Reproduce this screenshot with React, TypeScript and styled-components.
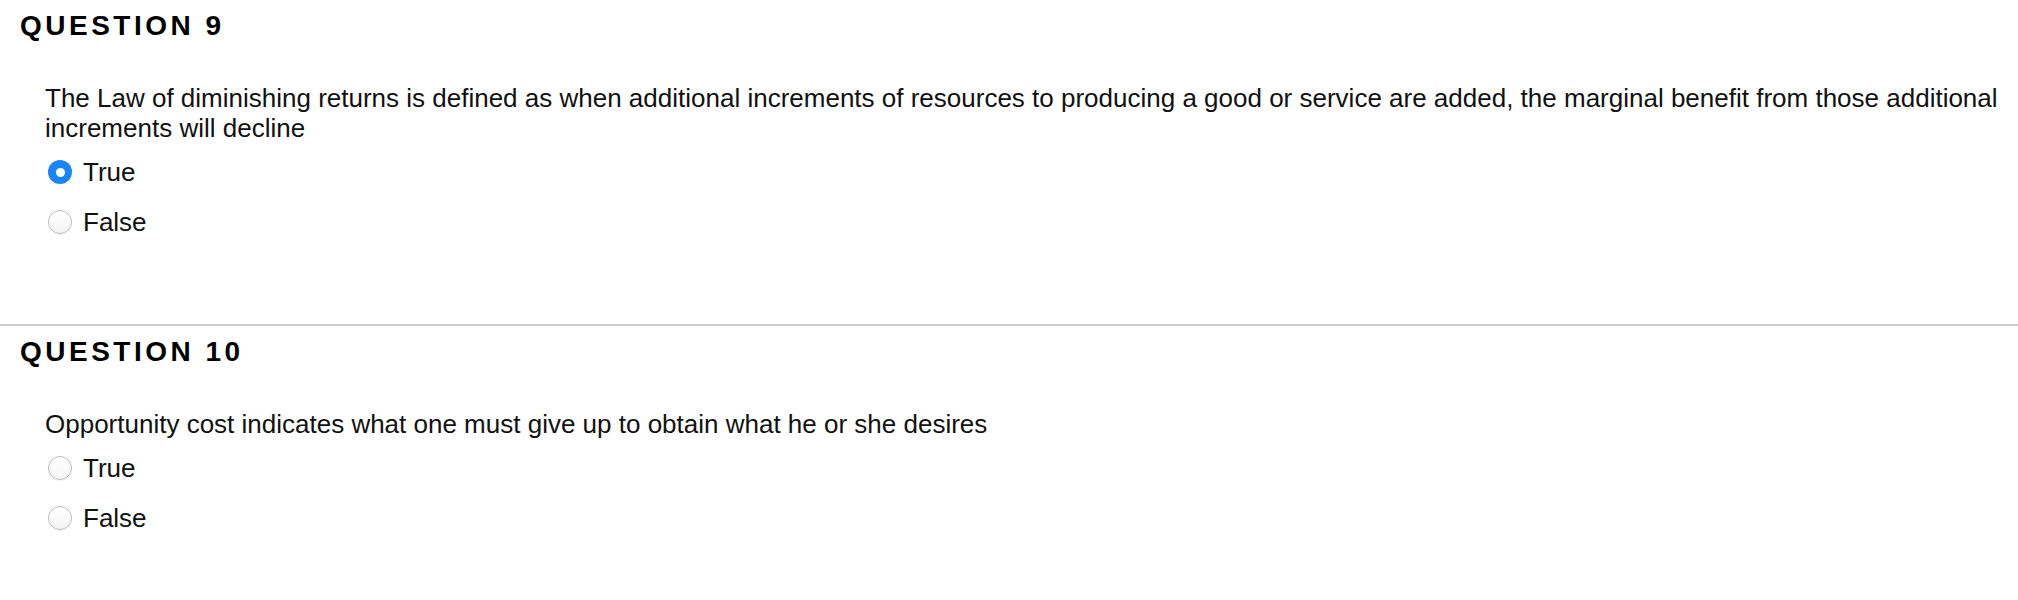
import React from "react";
import styled, { createGlobalStyle } from "styled-components";

const GlobalStyle = createGlobalStyle`
  html, body {
    margin: 0;
    padding: 0;
    background: #ffffff;
  }
  body {
    font-family: "Liberation Sans", Arial, Helvetica, sans-serif;
    color: #111111;
  }
`;

const Page = styled.div`
  display: flex;
  flex-direction: column;
  width: 2018px;
`;

const QuestionBlock = styled.section<{ $bottom: number }>`
  display: flex;
  flex-direction: column;
  padding: 9px 0 ${(p) => p.$bottom}px 20px;
`;

const Divider = styled.hr`
  margin: 0;
  border: 0;
  border-top: 2px solid #cccccc;
  width: 100%;
`;

const Heading = styled.h2`
  margin: 0;
  font-family: "Liberation Sans", Arial, Helvetica, sans-serif;
  font-size: 28px;
  line-height: 34px;
  font-weight: 700;
  letter-spacing: 3.5px;
  color: #000000;
`;

const Body = styled.div`
  display: flex;
  flex-direction: column;
  gap: 14px;
  margin-top: 40px;
  padding-left: 25px;
`;

const Prompt = styled.p`
  margin: 0;
  font-size: 26px;
  line-height: 30px;
  color: #111111;
`;

const Options = styled.div`
  display: flex;
  flex-direction: column;
  gap: 20px;
`;

const Option = styled.label`
  display: flex;
  align-items: center;
  gap: 11px;
  height: 30px;
  padding-left: 3px;
  font-size: 26px;
  line-height: 30px;
  color: #111111;
  cursor: pointer;
`;

const Radio = styled.span<{ $checked: boolean }>`
  box-sizing: border-box;
  display: inline-flex;
  align-items: center;
  justify-content: center;
  width: 24px;
  height: 24px;
  border-radius: 50%;
  flex: none;
  background: ${(p) =>
    p.$checked ? "#1a84fb" : "linear-gradient(#ffffff, #f4f4f4)"};
  border: ${(p) => (p.$checked ? "none" : "1px solid #bdbdbd")};
  box-shadow: ${(p) =>
    p.$checked ? "none" : "0 1px 1px rgba(0,0,0,0.06)"};

  &::after {
    content: "";
    display: ${(p) => (p.$checked ? "block" : "none")};
    width: 9px;
    height: 9px;
    border-radius: 50%;
    background: #ffffff;
  }
`;

type Q = {
  title: string;
  prompt: string;
  selected: number | null;
  bottom: number;
};

const questions: Q[] = [
  {
    title: "QUESTION 9",
    prompt:
      "The Law of diminishing returns is defined as when additional increments of resources to producing a good or service are added, the marginal benefit from those additional increments will decline",
    selected: 0,
    bottom: 87,
  },
  {
    title: "QUESTION 10",
    prompt:
      "Opportunity cost indicates what one must give up to obtain what he or she desires",
    selected: null,
    bottom: 60,
  },
];

const choices = ["True", "False"];

export default function App() {
  return (
    <>
      <GlobalStyle />
      <Page>
        {questions.map((q, i) => (
          <React.Fragment key={q.title}>
            {i > 0 && <Divider />}
            <QuestionBlock $bottom={q.bottom}>
              <Heading>{q.title}</Heading>
              <Body>
                <Prompt>{q.prompt}</Prompt>
                <Options>
                  {choices.map((c, j) => (
                    <Option key={c}>
                      <Radio $checked={q.selected === j} />
                      {c}
                    </Option>
                  ))}
                </Options>
              </Body>
            </QuestionBlock>
          </React.Fragment>
        ))}
      </Page>
    </>
  );
}
